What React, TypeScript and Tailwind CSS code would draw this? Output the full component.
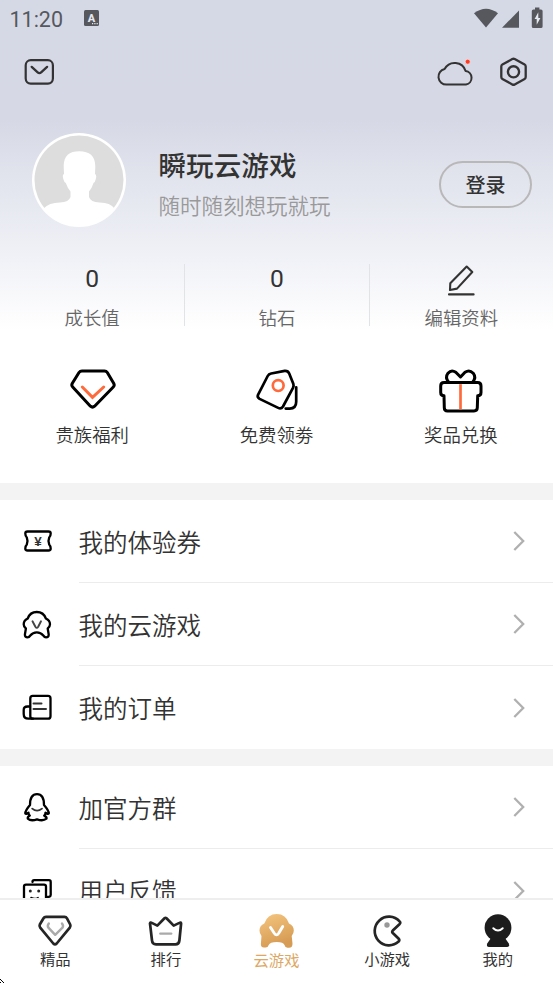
import type { ReactNode } from "react";

type IconProps = { size?: number; children: ReactNode; className?: string };

const Icon = ({ size = 32, children, className = "" }: IconProps) => (
  <svg
    width={size}
    height={size}
    viewBox={`0 0 ${size} ${size}`}
    fill="none"
    stroke="currentColor"
    strokeLinecap="round"
    strokeLinejoin="round"
    className={`shrink-0 ${className}`}
  >
    {children}
  </svg>
);

const StatusBar = () => (
  <div className="flex h-[37px] items-center justify-between pl-[9.500px] pr-[9px] text-[#56585e]">
    <div className="flex items-center">
      <span className="w-[74.500px] pt-[2px] font-['Roboto'] text-[21.500px] leading-none">11:20</span>
      <svg width="15" height="16" viewBox="0 0 15 16" className="mb-px">
        <rect width="15" height="16" rx="1.5" fill="currentColor" />
        <text x="7.5" y="11.5" textAnchor="middle" fontSize="11" fontWeight="800" fontFamily="Roboto" fill="#e6e8ef">
          A
        </text>
        <path d="M8 13.6h1.2M10.3 13.6h1.2M12.6 13.6h1.2" stroke="#e6e8ef" strokeWidth="1.1" />
      </svg>
    </div>
    <svg width="70" height="22" viewBox="0 0 70 22" fill="currentColor" className="mb-px">
      <path d="M0 6.2Q12 -2.8 24 6.2L12 20.5Z" />
      <path d="M28 20.8L45 3.4V20.8Z" />
      <path d="M61 .4h4.4v2H67q1.6 0 1.6 1.6v15.4q0 1.6-1.6 1.6h-7.6q-1.6 0-1.6-1.6V4q0-1.6 1.6-1.6H61Z" />
      <path d="M64.3 5.2L60.6 12h2.1v5.8L66.4 11h-2.1Z" fill="#e6e8ef" />
    </svg>
  </div>
);

const TopBar = () => (
  <div className="flex h-[70px] items-center justify-between pl-6 pr-[23px] text-[#333]">
    <Icon>
      <rect x="1.7" y="4.2" width="27.2" height="23.4" rx="5" strokeWidth="2.2" />
      <path d="M7.7 10.9L13.4 16.2Q15.4 18 17.4 16.2L23.1 10.9" strokeWidth="2.3" />
    </Icon>
    <div className="flex gap-[22px]">
      <svg width="40" height="32" viewBox="0 0 40 32" fill="none" stroke="currentColor" strokeWidth="2" strokeLinejoin="round">
        <path d="M10.5 28.6A7.9 7.9 0 0 1 8.6 13A11.4 11.4 0 0 1 29.600 15A6.900 6.900 0 0 1 30 28.600Z" />
        <circle cx="31.7" cy="5.7" r="2.5" fill="#ff3a20" stroke="#f3e3e6" strokeWidth=".7" />
      </svg>
      <Icon>
        <path d="M14.3 3.1Q15.5 2.4 16.7 3.1L26.6 8.6Q27.7 9.2 27.7 10.5V21Q27.7 22.3 26.6 22.9L16.7 28.4Q15.5 29.1 14.3 28.4L4.4 22.9Q3.3 22.3 3.3 21V10.5Q3.3 9.2 4.4 8.6Z" strokeWidth="2.3" />
        <circle cx="15.5" cy="15.8" r="5.6" strokeWidth="2.4" />
      </Icon>
    </div>
  </div>
);

const Avatar = () => (
  <svg width="94" height="94" viewBox="0 0 94 94" className="shrink-0">
    <circle cx="47" cy="47" r="47" fill="#fff" />
    <circle cx="47" cy="47" r="44.5" fill="#ddd" />
    <path
      d="M47.4 18.3C37 18.3 31.5 23 31.7 34L32 41Q30 41.500 31.300 46Q32 49 33.800 50Q35.500 55 38.500 58.500V64Q37 69 28 69.600Q17.500 69.500 11 76A46 46 0 0 0 83 76Q78 69.500 67.500 69.600Q58.500 69 57 64V58.500Q60 55 61.500 50Q63.300 49 63.800 46Q65 41.500 63 41L63.300 34C63.500 23 57.500 18.300 47.400 18.300Z"
      fill="#fff"
    />
  </svg>
);

const Profile = () => (
  <div className="mt-[26px] flex h-[94px] items-center pl-8 pr-[21px]">
    <Avatar />
    <div className="ml-[32.500px] flex-1 pt-[5px]">
      <h1 className="text-[27.6px] font-medium leading-[40px] text-[#333]">瞬玩云游戏</h1>
      <p className="mt-[5px] text-[21.5px] leading-[32px] text-[#999] font-[350]">随时随刻想玩就玩</p>
    </div>
    <button className="mt-[9px] h-[47px] w-[93px] rounded-full border-2 border-[#b8b8b8] text-[20px] font-medium leading-none text-[#333]">
      登录
    </button>
  </div>
);

const stats = [
  { label: "成长值", value: "0" },
  { label: "钻石", value: "0" },
];

const Stats = () => (
  <div className="mt-[37px] grid h-[62px] grid-cols-3 text-center">
    {stats.map((item, i) => (
      <div key={item.label} className={`h-[62px] ${i > 0 ? "border-l border-[#e2e3e6]" : ""}`}>
        <div className="h-[36px] font-['Roboto'] text-[24.6px] leading-[29px] text-[#333]">{item.value}</div>
        <div className="text-[18.4px] font-[350] leading-[34px] text-[#666]">{item.label}</div>
      </div>
    ))}
    <div className="h-[62px] border-l border-[#e2e3e6]">
      <div className="flex h-[36px] justify-center text-[#333]">
        <Icon>
          <path d="M21.7 2.6L27.3 8L12 24.6L5 26L5.300 19.300Z" strokeWidth="2.100" />
          <path d="M4 30.400H28.600" strokeWidth="2.100" />
        </Icon>
      </div>
      <div className="text-[18.4px] font-[350] leading-[34px] text-[#666]">编辑资料</div>
    </div>
  </div>
);

const features = [
  {
    label: "贵族福利",
    icon: (
      <>
        <path d="M16 6H38.500Q40.300 6 41.300 7.500L47.800 18.500Q48.800 20.500 47.300 22L28.600 41.200Q26.500 43 24.400 41.200L6.700 22Q5.200 20.500 6.200 18.500L13 7.500Q14 6 16 6Z" />
        <path d="M16.300 22L26.500 32.300L37.700 22" stroke="#ff6a3c" strokeLinejoin="miter" />
      </>
    ),
  },
  {
    label: "免费领劵",
    icon: (
      <g transform="translate(.7 .3)">
        <path d="M20.500 8.200L34 5.600Q37.300 5.300 38.500 8.200L42.600 18.500Q43.300 20.500 42.300 22.500L32.300 41.200Q30.500 44 27.500 42.600L8.900 33.600Q6.200 32 7.300 29.500L17 10.700Q18 8.700 20.500 8.200Z" strokeWidth="2.700" />
        <path d="M45.500 22V36.500Q45.500 43.300 39 43.300H35" strokeWidth="2.700" />
        <circle cx="27.500" cy="20.300" r="5.400" stroke="#ff6a3c" strokeWidth="2.700" />
      </g>
    ),
  },
  {
    label: "奖品兑换",
    icon: (
      <>
        <path d="M13.500 17Q9.800 12.500 13 8.200Q16.300 4.300 20.800 7.200L25.500 12L30 7.200Q34.500 4.300 38.200 8.200Q41.500 12.500 37.800 17" />
        <path d="M9 17.500H42.600Q46 17.500 46 20.900V27.500Q46 30.800 42.700 30.800L42.300 42.800Q42.200 46 39 46H12.500Q9.300 46 9.300 42.800L9 30.800Q5.700 30.800 5.700 27.500V20.900Q5.700 17.500 9 17.500Z" />
        <path d="M25.500 19.200V44.300" stroke="#ff6a3c" strokeWidth="2.700" strokeLinecap="butt" />
      </>
    ),
  },
];

const Features = () => (
  <div className="mt-[39px] grid h-[118px] grid-cols-3">
    {features.map((item) => (
      <div key={item.label} className="flex flex-col items-center">
        <Icon size={52} className="text-black [stroke-width:3]">
          {item.icon}
        </Icon>
        <span className="mt-[3px] text-[18.4px] font-[350] leading-[28px] text-[#333]">{item.label}</span>
      </div>
    ))}
  </div>
);

const menuGroups = [
  [
    {
      label: "我的体验券",
      icon: (
        <>
          <path d="M6.500 6.500H27.500Q29.700 6.500 29.700 8.500Q29.700 11 28.200 12.500Q26.800 16 28.200 19.500Q29.700 21 29.700 23.500Q29.700 25.500 27.500 25.500H6.500Q4.300 25.500 4.300 23.500Q4.300 21 5.800 19.500Q7.200 16 5.800 12.500Q4.300 11 4.300 8.500Q4.300 6.500 6.500 6.500Z" />
          <text x="17" y="20.500" textAnchor="middle" fontSize="13.500" fontWeight="700" fontFamily="Liberation Sans" fill="#333" stroke="none">
            ¥
          </text>
        </>
      ),
    },
    {
      label: "我的云游戏",
      icon: (
        <>
          <path d="M6.700 10.500Q9 4 15.800 4Q22.500 4 24.900 10.500Q29 12.500 29 16.200Q29 18.800 26.700 20.500L27.700 26.500Q27.800 29.300 25 29.300Q23.500 29.300 22.300 27.500Q19.800 24.300 15.800 24.300Q11.800 24.300 9.300 27.500Q8.100 29.300 6.600 29.300Q3.800 29.300 3.900 26.500L4.900 20.500Q2.700 18.800 2.700 16.200Q2.700 12.500 6.700 10.500Z" />
          <path d="M11.500 13.300L14.400 18.800Q15.800 21 17.200 18.800L20 13.300" stroke="#444" strokeWidth="1.900" />
        </>
      ),
    },
    {
      label: "我的订单",
      icon: (
        <>
          <rect x="9.300" y="4.900" width="20.200" height="22.800" rx="2.500" />
          <path d="M9 15.500H6.500Q2.700 15.500 2.700 19V23Q2.700 27.700 7.500 27.700H12" />
          <path d="M12.500 12.400H20.500M12.500 18H25" strokeWidth="2" stroke="#333" />
        </>
      ),
    },
  ],
  [
    {
      label: "加官方群",
      icon: (
        <>
          <path d="M9 14C9 7 11.500 3.200 16 3.200S23 7 23 14Q27.800 19.500 27.800 22.300Q27 23.500 24.500 21.700Q24.500 23.500 23.200 24.600Q26 26 25.500 27.700Q22 30.500 16 28.300Q10 30.500 6.800 27.700Q6.300 26 8.800 24.600Q7.500 23.500 7.500 21.700Q5 23.500 4.300 22.300Q4.300 19.500 9 14Z" />
          <path d="M11.200 17.600Q16 21.600 21 17.600" strokeWidth="1.800" stroke="#333" />
        </>
      ),
    },
    {
      label: "用户反馈",
      icon: (
        <>
          <path d="M11.500 8V7.800Q11.500 6.200 13.100 6.200H28Q29.700 6.200 29.700 7.900V21Q29.700 23 26.500 23" />
          <rect x="3" y="10.600" width="22" height="18" rx="2" />
          <circle cx="9.300" cy="17" r="1.500" fill="#222" stroke="none" />
          <circle cx="17.700" cy="17" r="1.500" fill="#222" stroke="none" />
          <path d="M10 23.500Q14 25.500 17 23.500" strokeWidth="1.500" />
        </>
      ),
    },
  ],
];

const MenuList = () => (
  <>
    {menuGroups.map((group, index) => (
      <section key={index} className="border-t-[17px] border-[#f3f3f3]">
        {group.map((item, i) => (
          <div key={item.label} className="flex h-[83px] items-center pl-[21px]">
            <Icon className="mb-[2px] text-black [stroke-width:2.3]">{item.icon}</Icon>
            <div
              className={`ml-[25.500px] flex h-full flex-1 items-center justify-between pr-[28px] ${
                i < group.length - 1 ? "border-b border-[#ececec]" : ""
              }`}
            >
              <span className="pt-[2px] text-[24.5px] font-[350] leading-none text-[#333]">{item.label}</span>
              <svg width="12" height="22" viewBox="0 0 12 22" fill="none" stroke="#b0b0b0" strokeWidth="2.300">
                <path d="M1.300 2L10.200 11L1.300 20" />
              </svg>
            </div>
          </div>
        ))}
      </section>
    ))}
  </>
);

const tabs = [
  {
    label: "精品",
    icon: (
      <>
        <path d="M11 5.900H29.500Q31.200 5.900 32 7.300L35.200 13.500Q36 15.200 34.800 16.700L21.700 32.500Q20 34.200 18.300 32.500L5.200 16.700Q4 15.200 4.800 13.500L8.500 7.300Q9.300 5.900 11 5.900Z" />
        <path d="M13.800 12.500Q12 15 13.400 16.700L20.200 23.800L27.500 16.700Q28.800 15 27 12.500" stroke="#aaa" strokeWidth="2.400" />
      </>
    ),
  },
  {
    label: "排行",
    icon: (
      <>
        <path d="M4 12.500Q4.500 11 5.800 11.900L11.300 14.600L18.500 7.300Q19.500 6.400 20.500 7.300L27.700 14.600L33.400 11.900Q35 11 35.100 12.500L33.400 29.500Q33 33.300 29.500 33.300H10Q6.300 33.300 6 29.500Z" />
        <path d="M14.300 22.600H25.200" stroke="#aaa" strokeWidth="2.400" />
      </>
    ),
  },
  {
    label: "云游戏",
    active: true,
    icon: (
      <>
        <defs>
          <linearGradient id="gold" x1="0" y1="0" x2=".35" y2="1">
            <stop offset="0" stopColor="#f5c680" />
            <stop offset="1" stopColor="#d69b54" />
          </linearGradient>
        </defs>
        <path
          d="M8.300 12.500Q11.500 3 20.700 3Q30 3 33 12.500Q37.800 14.500 37.800 19.500Q37.800 22.500 35.700 25L36.500 32.500Q36.700 36.700 33 36.700H31.500Q29 36.700 28.500 34Q27.500 31 20.700 31Q14 31 12.700 34Q12 36.500 9.500 36.500H8Q4.500 36.500 4.900 32.500L5.500 25Q3.500 22.500 3.500 19.500Q3.500 14.500 8.300 12.500Z"
          fill="url(#gold)"
          stroke="none"
        />
        <path d="M14.500 16.500L18.300 22.300Q20.500 25.500 22.700 22.300L26.700 15.500" stroke="#fff" strokeWidth="2.900" />
      </>
    ),
  },
  {
    label: "小游戏",
    icon: (
      <>
        <path d="M32.600 10.400A14.300 14.300 0 1 0 31.600 30.600Q33 29 31.500 27.500L25.800 22Q24.700 20.800 25.800 19.500L32.700 12.900Q33.900 11.700 32.600 10.400Z" />
        <circle cx="20" cy="14" r="2.700" fill="#999" stroke="none" />
      </>
    ),
  },
  {
    label: "我的",
    icon: (
      <>
        <circle cx="20" cy="16.700" r="13.400" fill="#1c1c1c" stroke="none" />
        <path d="M13 27L9.200 32.500Q8 35.900 11 35.900H29Q32 35.900 30.800 32.500L27 27Z" fill="#1c1c1c" stroke="none" />
        <path d="M15.300 17.300Q20 21.800 24.700 17.300" stroke="#fff" strokeWidth="2" />
      </>
    ),
  },
];

const TabBar = () => (
  <nav className="relative grid h-[86px] shrink-0 grid-cols-5 border-t-2 border-[#eee] bg-white">
    {tabs.map((tab) => (
      <div key={tab.label} className="flex flex-col items-center pt-[11px]">
        <Icon size={40} className="text-[#252525] [stroke-width:2.7]">
          {tab.icon}
        </Icon>
        <span
          className={`-mt-px text-[15.300px] leading-[16px] ${
            tab.active ? "pt-px text-[#dda865]" : "text-[#333]"
          }`}
        >
          {tab.label}
        </span>
      </div>
    ))}
    <svg width="5" height="5" viewBox="0 0 5 5" className="absolute bottom-0 left-0" fill="#000">
      <path d="M0 0h1v1H0zM1 1h1v1H1zM0 3h1v1H0zM2 2h1v1H2zM3 3h1v1H3z" />
    </svg>
  </nav>
);

const App = () => (
  <div className="flex h-[984px] w-[553px] flex-col overflow-hidden bg-white font-['Noto_Sans_CJK_SC',sans-serif]">
    <main className="min-h-0 flex-1 overflow-hidden">
      <header className="h-[483px] bg-[linear-gradient(to_bottom,#d5d9e5_0px,#d6d9e5_120px,#e4e6ef_190px,#f1f2f7_260px,#ffffff_330px)]">
        <StatusBar />
        <TopBar />
        <Profile />
        <Stats />
        <Features />
      </header>
      <MenuList />
    </main>
    <TabBar />
  </div>
);

export default App;
